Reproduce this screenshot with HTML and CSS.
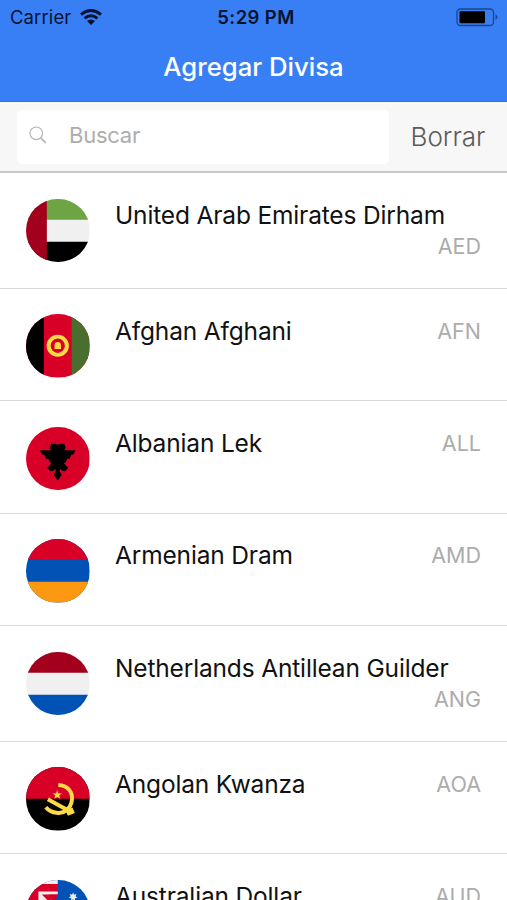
FILE: index.html
```html
<!DOCTYPE html>
<html lang="es">
<head>
<meta charset="utf-8">
<meta name="viewport" content="width=device-width, initial-scale=1">
<title>Agregar Divisa</title>
<link rel="stylesheet" href="styles.css">
</head>
<body>
<div class="app">
  <header class="header">
    <div class="status">
      <div class="status-left">
        <span class="carrier">Carrier</span>
        <svg class="wifi" viewBox="0 0 22 16" width="22" height="16" fill="none" stroke="#06122f" stroke-width="2.9"><path d="M1 5.6Q11-2.6 21 5.6"/><path d="M4.6 9.4Q11 4 17.4 9.4"/><path d="M7 12Q11 8.8 15 12L11 16Z" fill="#06122f" stroke="none"/></svg>
      </div>
      <span class="time">5:29 PM</span>
      <div class="status-right">
        <svg viewBox="0 0 43 19" width="43" height="19"><rect x="1" y="1" width="36.5" height="16.5" rx="3.5" fill="none" stroke="#1d4588" stroke-width="1.3"/><rect x="3.5" y="3.2" width="25.5" height="12" rx="1" fill="#000"/><path d="M39.5 6.2Q43.5 9 39.5 12Z" fill="#1d4588"/></svg>
      </div>
    </div>
    <h1 class="title">Agregar Divisa</h1>
  </header>
  <div class="toolbar">
    <label class="search">
      <svg viewBox="0 0 18 18" width="18" height="18" fill="none" stroke="#b4b4b4"><circle cx="7.3" cy="7.3" r="6.3" stroke-width="1.1"/><path d="M11.8 11.8L16.8 16.8" stroke-width="1.7"/></svg>
      <span class="placeholder">Buscar</span>
    </label>
    <button class="clear">Borrar</button>
  </div>
  <ul class="list">
    <li class="row">
      <svg class="flag" viewBox="0 0 64 64"><path fill="#f0f0f0" d="M0 0h64v64H0z"/><path fill="#6da544" d="M0 0h64v21H0z"/><path fill="#000" d="M0 43h64v21H0z"/><path fill="#a2001d" d="M0 0h21v64H0z"/></svg>
      <div class="text"><span class="name">United Arab Emirates Dirham</span><span class="code">AED</span></div>
    </li>
    <li class="row">
      <svg class="flag" viewBox="0 0 64 64"><path fill="#d80027" d="M0 0h64v64H0z"/><path fill="#000" d="M0 0h18v64H0z"/><path fill="#496e2d" d="M46 0h18v64H46z"/><circle cx="32" cy="32" r="9.2" fill="#d80027" stroke="#ffda44" stroke-width="4"/><path fill="#ffda44" d="M28.8 35.3v-4a3.2 3.2 0 0 1 6.4 0v4z"/></svg>
      <div class="text"><span class="name">Afghan Afghani</span><span class="code">AFN</span></div>
    </li>
    <li class="row">
      <svg class="flag" viewBox="0 0 64 64"><path fill="#d80027" d="M0 0h64v64H0z"/><path fill="#000" d="M50 23.500H38.500l1.500-2.500-1.500-4h-4L32 18l-2.500-1h-4L24 21l1.500 2.500H14l2.500 4.500h2l1.500 4h2.500l1.500 3.500 2 1-4.500 4.500 3 3.500 3-.5 2-2 .5 2.500-2 3.500 4 6 4-6-2-3.500.5-2.500 2 2 3 .5 3-3.500-4.500-4.500 2-1 1.500-3.500H44l1.500-4h2z"/></svg>
      <div class="text"><span class="name">Albanian Lek</span><span class="code">ALL</span></div>
    </li>
    <li class="row">
      <svg class="flag" viewBox="0 0 64 64"><path fill="#0052b4" d="M0 0h64v64H0z"/><path fill="#d80027" d="M0 0h64v21H0z"/><path fill="#ff9811" d="M0 43h64v21H0z"/></svg>
      <div class="text"><span class="name">Armenian Dram</span><span class="code">AMD</span></div>
    </li>
    <li class="row">
      <svg class="flag" viewBox="0 0 64 64"><path fill="#f0f0f0" d="M0 0h64v64H0z"/><path fill="#a2001d" d="M0 0h64v21H0z"/><path fill="#0052b4" d="M0 43h64v21H0z"/></svg>
      <div class="text"><span class="name">Netherlands Antillean Guilder</span><span class="code">ANG</span></div>
    </li>
    <li class="row">
      <svg class="flag" viewBox="0 0 64 64"><path fill="#000" d="M0 0h64v64H0z"/><path fill="#d80027" d="M0 0h64v32H0z"/><g fill="none" stroke="#ffda44"><path stroke-width="4" d="M32.5 18.2C42 18.5 47 25 46.3 33C45.4 42 38 47.5 31 46.2C25 45.5 22 43 20 40.5"/><path stroke-width="4" d="M22 32.5L45 45"/><path stroke-width="6" d="M41 46.5L48 43.5"/></g><path fill="#ffda44" d="M31.5 23.5l1.2 3.1 3.5-.1-2.7 2.2 1 3.3-3-1.8-3 1.8 1-3.3-2.7-2.2 3.5.1z"/></svg>
      <div class="text"><span class="name">Angolan Kwanza</span><span class="code">AOA</span></div>
    </li>
    <li class="row">
      <svg class="flag" viewBox="0 0 64 64"><path fill="#0052b4" d="M0 0h64v64H0z"/><path fill="#f0f0f0" d="M0 0h32v4H0z"/><path fill="#d80027" d="M0 4h32v28H0z"/><path fill="#f0f0f0" d="M12.500 11.500h19.500v3H20L32 26v6H12.500z"/><path fill="#d80027" d="M16 14.500h4.500L32 26v5z"/><path fill="#d80027" d="M23 14.500h9v3h-5z"/><path fill="#0052b4" d="M32 17v15h-3l-3-10z"/><path fill="#f0f0f0" d="M47.500 12.500l1 2.300 2.500-.6-1.100 2.200 2 1.600-2.500.5v2.500L47.500 19.400 45.600 21v-2.500l-2.500-.5 2-1.600-1.100-2.200 2.500.6z"/></svg>
      <div class="text"><span class="name">Australian Dollar</span><span class="code">AUD</span></div>
    </li>
  </ul>
</div>
</body>
</html>
```
FILE: styles.css
```css
* {
  box-sizing: border-box;
}

body {
  margin: 0;
  background: #fff;
  font-family: Inter, "Liberation Sans", sans-serif;
}

.app {
  height: 900px;
  overflow: hidden;
}

.header {
  height: 102px;
  background: #387ff5;
  border-bottom: 1px solid #3471d5;
}

.status {
  display: grid;
  grid-template-columns: 1fr auto 1fr;
  align-items: center;
  height: 34px;
  padding: 0 8px 0 10px;
  color: #06122f;
}

.status-left {
  display: flex;
  align-items: center;
  gap: 9px;
}

.status-right {
  display: flex;
  justify-content: flex-end;
}

.carrier {
  font-size: 18.5px;
  letter-spacing: 0.1px;
}

.time {
  padding-left: 3px;
  font-size: 18.5px;
  font-weight: 600;
  letter-spacing: 0.4px;
}

.title {
  margin: 0;
  color: #fff;
  font-size: 25.7px;
  font-weight: 450;
  line-height: 66px;
  text-align: center;
}

.toolbar {
  display: flex;
  height: 71px;
  padding: 8px 0 8px 17px;
  background: #f7f7f7;
  border-bottom: 2px solid #c9c9c9;
}

.search {
  display: flex;
  align-items: center;
  gap: 22px;
  width: 372px;
  height: 54px;
  padding: 0 0 4px 12px;
  background: #fff;
  border-radius: 5px;
}

.placeholder {
  color: #adadad;
  font-size: 22px;
  letter-spacing: -0.25px;
}

.clear {
  flex: 1;
  padding: 0;
  border: 0;
  background: none;
  color: #5b5b5b;
  font: 320 26px/54px Inter, "Liberation Sans", sans-serif;
}

.list {
  margin: 0;
  padding: 0;
  list-style: none;
}

.row {
  display: flex;
  gap: 25.5px;
  padding: 25.5px 26px 22.4px;
  border-bottom: 1px solid #d8d8d8;
}

.flag {
  flex: none;
  width: 63.5px;
  height: 63.5px;
  border-radius: 50%;
}

.text {
  display: flex;
  flex: 1;
  flex-wrap: wrap;
  align-content: flex-start;
  justify-content: space-between;
  padding: 1.3px 0 3.7px;
}

.name {
  color: #111;
  font-size: 24.5px;
  letter-spacing: -0.16px;
  line-height: 31px;
}

.code {
  margin-left: auto;
  color: #acacac;
  font-size: 21.5px;
  font-weight: 370;
  line-height: 31px;
}
```
